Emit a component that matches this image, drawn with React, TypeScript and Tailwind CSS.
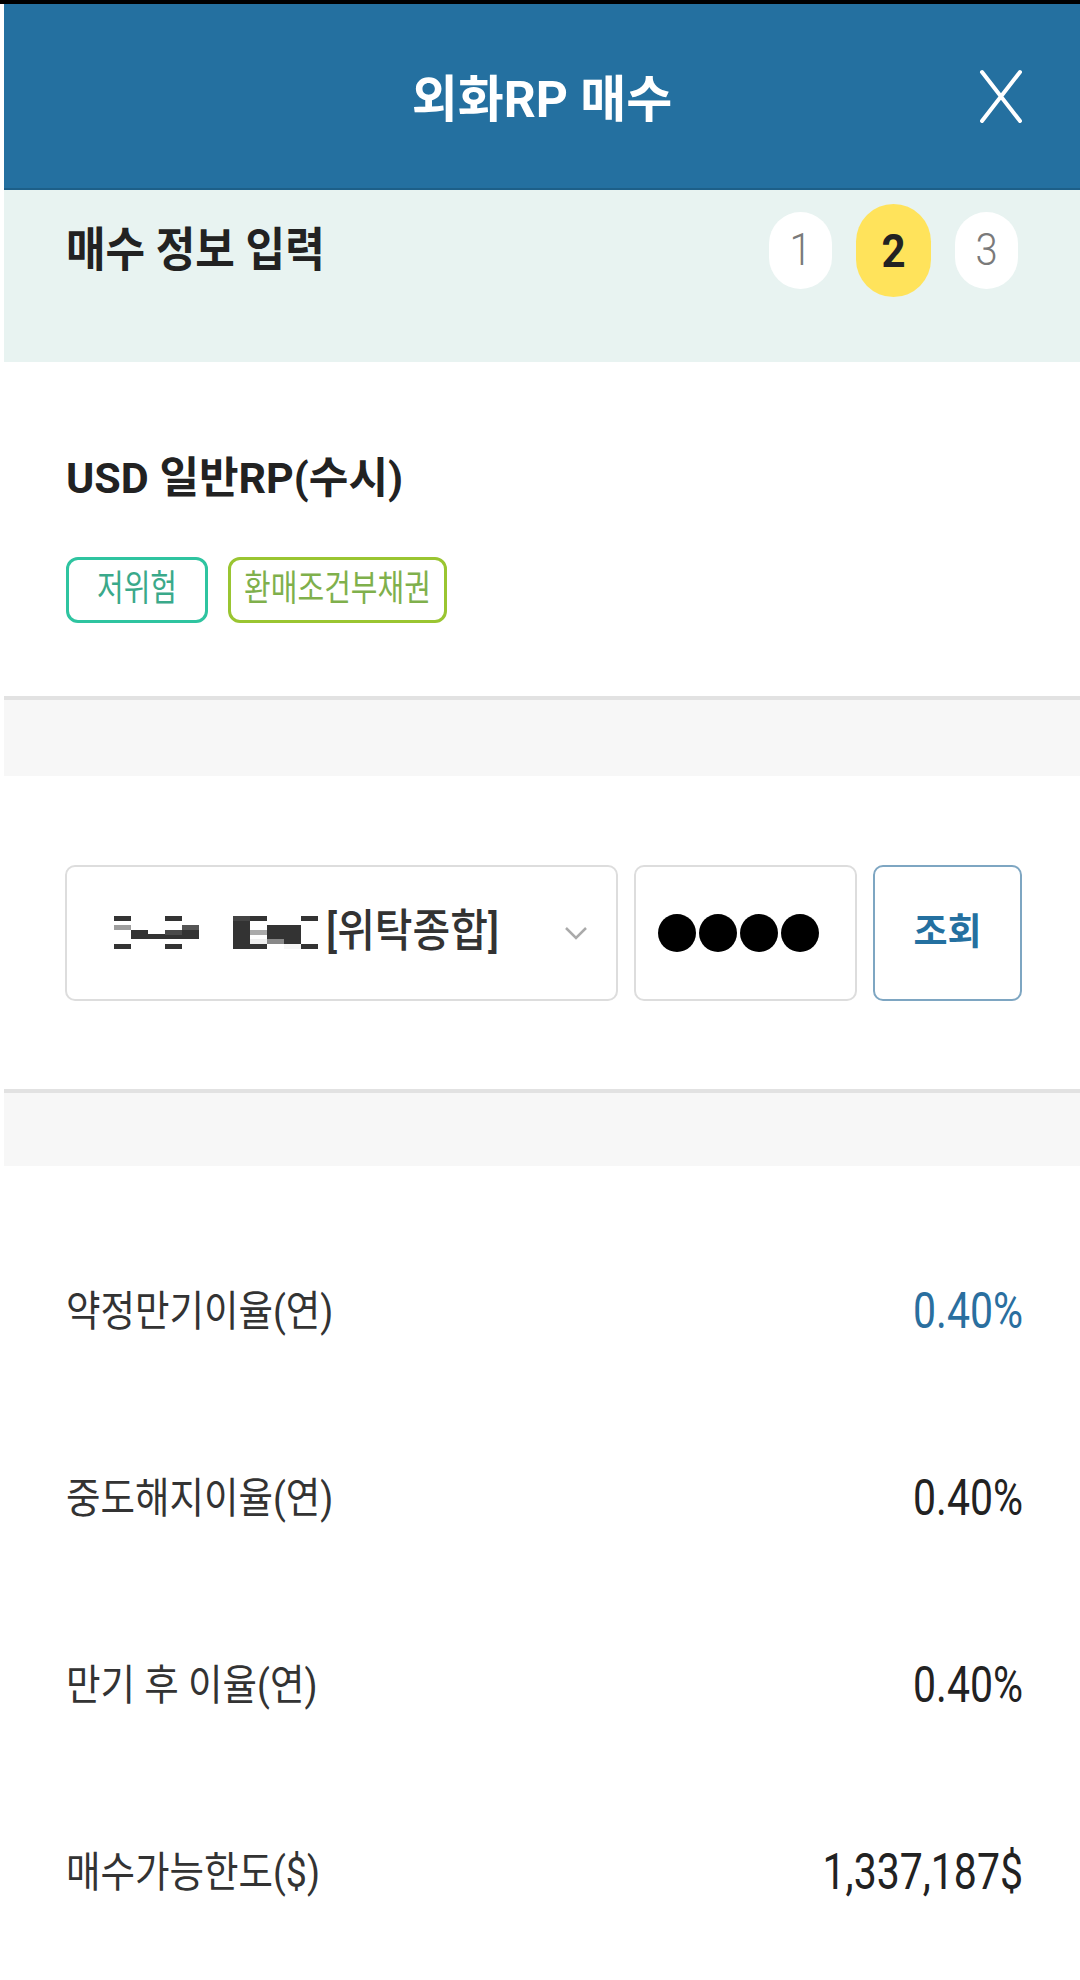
import React from "react";

const font = { fontFamily: 'Roboto, "Noto Sans CJK KR", sans-serif' };

function Mosaic() {
  // blurred account number
  const cells: [number, number, number, number, string][] = [
    [0, 0, 17, 5, "#333"],
    [51, 0, 17, 5, "#333"],
    [0, 9, 17, 5, "#9e9e9e"],
    [68, 9, 17, 5, "#555"],
    [17, 14, 17, 9, "#333"],
    [34, 18, 17, 5, "#333"],
    [51, 14, 34, 9, "#333"],
    [51, 14, 17, 5, "#4a4a4a"],
    [0, 28, 17, 5, "#333"],
    [51, 28, 17, 5, "#333"],
    [119, 0, 17, 33, "#333"],
    [119, 0, 17, 5, "#444"],
    [136, 0, 17, 5, "#333"],
    [187, 0, 17, 5, "#333"],
    [136, 14, 17, 5, "#aaa"],
    [153, 9, 34, 19, "#333"],
    [136, 23, 17, 5, "#eee"],
    [153, 23, 17, 5, "#888"],
    [170, 28, 17, 5, "#f5f5f5"],
    [187, 28, 17, 5, "#333"],
    [136, 28, 17, 5, "#333"],
  ];
  return (
    <svg width="204" height="33" viewBox="0 0 204 33" className="shrink-0">
      {cells.map(([x, y, w, h, c], i) => (
        <rect key={i} x={x} y={y} width={w} height={h} fill={c} />
      ))}
    </svg>
  );
}

function Step({ n, active }: { n: number; active?: boolean }) {
  return active ? (
    <div className="flex h-[93px] w-[75px] items-center justify-center rounded-full bg-[#ffe35b] text-[42px] font-bold text-[#222]">
      <span className="inline-block scale-y-[1.12]">{n}</span>
    </div>
  ) : (
    <div className="flex h-[77px] w-[63px] items-center justify-center rounded-full bg-white text-[40px] font-light text-[#7a7a7a]">
      <span className="inline-block scale-y-[1.12]">{n}</span>
    </div>
  );
}

function Row({ label, value, blue }: { label: string; value: string; blue?: boolean }) {
  return (
    <div className="flex h-[187px] items-center justify-between pl-[62px] pr-[57px]">
      <span className="inline-block scale-y-[1.12] text-[37.5px] text-[#333]">{label}</span>
      <span className={`inline-block scale-y-[1.2] text-[41px] ${blue ? "text-[#2a6f9f]" : "text-[#222]"}`}>{value}</span>
    </div>
  );
}

export default function App() {
  return (
    <div className="min-h-[1980px] border-t-4 border-black bg-white pl-1" style={font}>
      {/* Header */}
      <header className="relative flex h-[186px] items-center justify-center border-b-2 border-[#1d5f88] bg-[#2470a0] pt-[8px]">
        <h1 className="text-[50px] font-bold text-white">외화RP 매수</h1>
        <button className="absolute right-[57px] top-[65px]">
          <svg width="44" height="55" viewBox="0 0 44 55" fill="none" stroke="white" strokeWidth="4" strokeLinecap="round">
            <path d="M3 3L41 52M41 3L3 52" />
          </svg>
        </button>
      </header>

      {/* Step bar */}
      <div className="h-[172px] bg-[#e8f3f1]">
        <div className="flex h-[120px] items-center justify-between pl-[62px] pr-[62px]">
          <span className="inline-block scale-y-[1.08] text-[43px] font-bold text-[#222]">매수 정보 입력</span>
          <div className="flex items-center gap-6">
            <Step n={1} />
            <Step n={2} active />
            <Step n={3} />
          </div>
        </div>
      </div>

      {/* Product */}
      <section className="h-[334px] pl-[62px] pt-[91px]">
        <p className="text-[43px] font-bold leading-[50px] text-[#222]">USD 일반RP(수시)</p>
        <div className="mt-[54px] flex gap-5">
          <span className="flex h-[66px] w-[142px] items-center justify-center rounded-[12px] border-[3px] border-[#2ec4a0] text-[29px] text-[#3aa98a]">
            <span className="inline-block scale-y-[1.25]">저위험</span>
          </span>
          <span className="flex h-[66px] w-[219px] items-center justify-center rounded-[12px] border-[3px] border-[#9ac531] text-[29px] text-[#7fb04c]">
            <span className="inline-block scale-y-[1.25]">환매조건부채권</span>
          </span>
        </div>
      </section>

      <div className="h-[80px] border-t-4 border-[#e2e2e2] bg-[#f7f7f7]" />

      {/* Account */}
      <section className="flex h-[313px] items-center gap-4 pl-[61px] pr-[57px]">
        <div className="flex h-[136px] w-[553px] items-center rounded-[10px] border-2 border-[#dddddd] pl-[47px] pr-[28px]">
          <Mosaic />
          <span className="ml-[8px] inline-block scale-y-[1.1] text-[41px] font-medium text-[#333]">[위탁종합]</span>
          <svg width="24" height="14" viewBox="0 0 24 14" fill="none" stroke="#aaa" strokeWidth="2.5" className="ml-auto">
            <path d="M2 2l10 10L22 2" />
          </svg>
        </div>
        <div className="flex h-[136px] w-[223px] items-center gap-[3px] rounded-[10px] border-2 border-[#dddddd] pl-[22px]">
          {[0, 1, 2, 3].map((i) => (
            <span key={i} className="h-[38px] w-[38px] rounded-full bg-black" />
          ))}
        </div>
        <button className="flex h-[136px] w-[149px] items-center justify-center rounded-[10px] border-2 border-[#7ea6c2] text-[37px] font-bold text-[#2470a0]">
          조회
        </button>
      </section>

      <div className="h-[77px] border-t-4 border-[#e2e2e2] bg-[#f7f7f7]" />

      {/* Rates */}
      <section className="pt-[52px]">
        <Row label="약정만기이율(연)" value="0.40%" blue />
        <Row label="중도해지이율(연)" value="0.40%" />
        <Row label="만기 후 이율(연)" value="0.40%" />
        <Row label="매수가능한도($)" value="1,337,187$" />
      </section>
    </div>
  );
}
